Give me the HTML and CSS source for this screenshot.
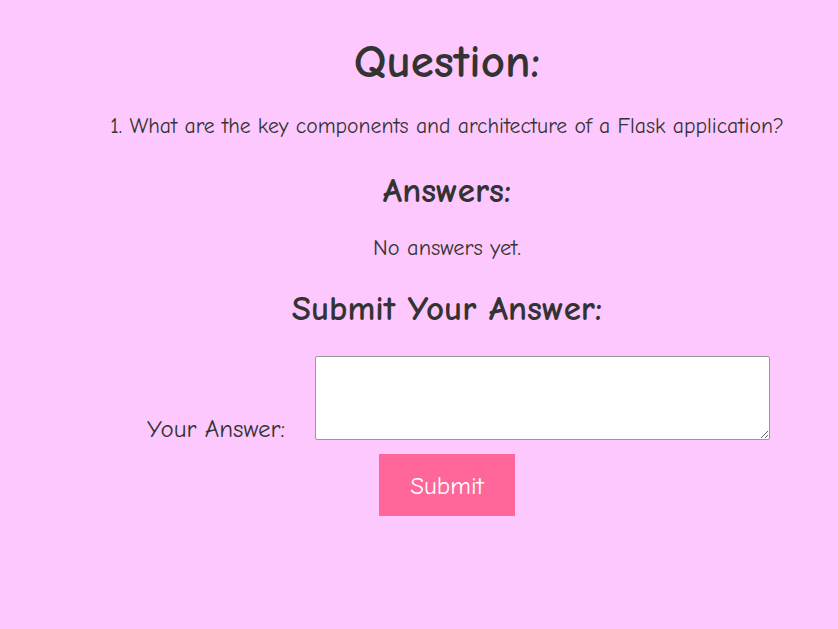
FILE: index.html
```html
<!DOCTYPE html>
<html>
<head>
<meta charset="utf-8">
<link rel="stylesheet" href="styles.css">
</head>
<body>
<div class="container">
  <h1>Question:</h1>
  <ol class="question">
    <li>What are the key components and architecture of a Flask application?</li>
  </ol>
  <h2>Answers:</h2>
  <p class="empty">No answers yet.</p>
  <h2 class="submit-title">Submit Your Answer:</h2>
  <form class="answer-form">
    <div class="row"><label class="label" for="answer">Your Answer:</label><textarea id="answer" class="answer-box"></textarea></div>
    <div class="actions"><button type="button" class="submit">Submit</button></div>
  </form>
</div>
</body>
</html>
```

FILE: styles.css
```css
html, body {
  margin: 0;
  padding: 0;
}
body {
  background: #fdc8fd;
  color: #333333;
  font-family: "Comic Sans MS", "Comic Neue", cursive;
  height: 629px;
}
.container {
  margin-left: 56px;
  text-align: center;
  padding-top: 1px;
}
h1 {
  font-size: 47px;
  line-height: 56px;
  margin: 33px 0 0;
}
.question {
  margin: 22px 0 0;
  padding-left: 0;
  list-style-position: inside;
  font-size: 21.7px;
  line-height: 28px;
}
h2 {
  font-size: 35px;
  line-height: 42px;
  margin: 30px 0 0;
}
.empty {
  font-size: 22.4px;
  line-height: 28px;
  margin: 22px 0 0;
}
.submit-title {
  margin-top: 26px;
}
.answer-form {
  margin-top: 26px;
}
.row {
  padding-left: 23px;
}
.label {
  font-size: 25px;
  margin-right: 30px;
}
.answer-box {
  width: 449px;
  height: 78px;
  vertical-align: -3px;
  border: 1px solid #999;
  border-radius: 2px;
  background: #ffffff;
}
.actions {
  margin-top: 11px;
}
.submit {
  background: #ff6699;
  color: #ffffff;
  border: none;
  width: 136px;
  height: 62px;
  font-family: inherit;
  font-size: 25px;
}
```
